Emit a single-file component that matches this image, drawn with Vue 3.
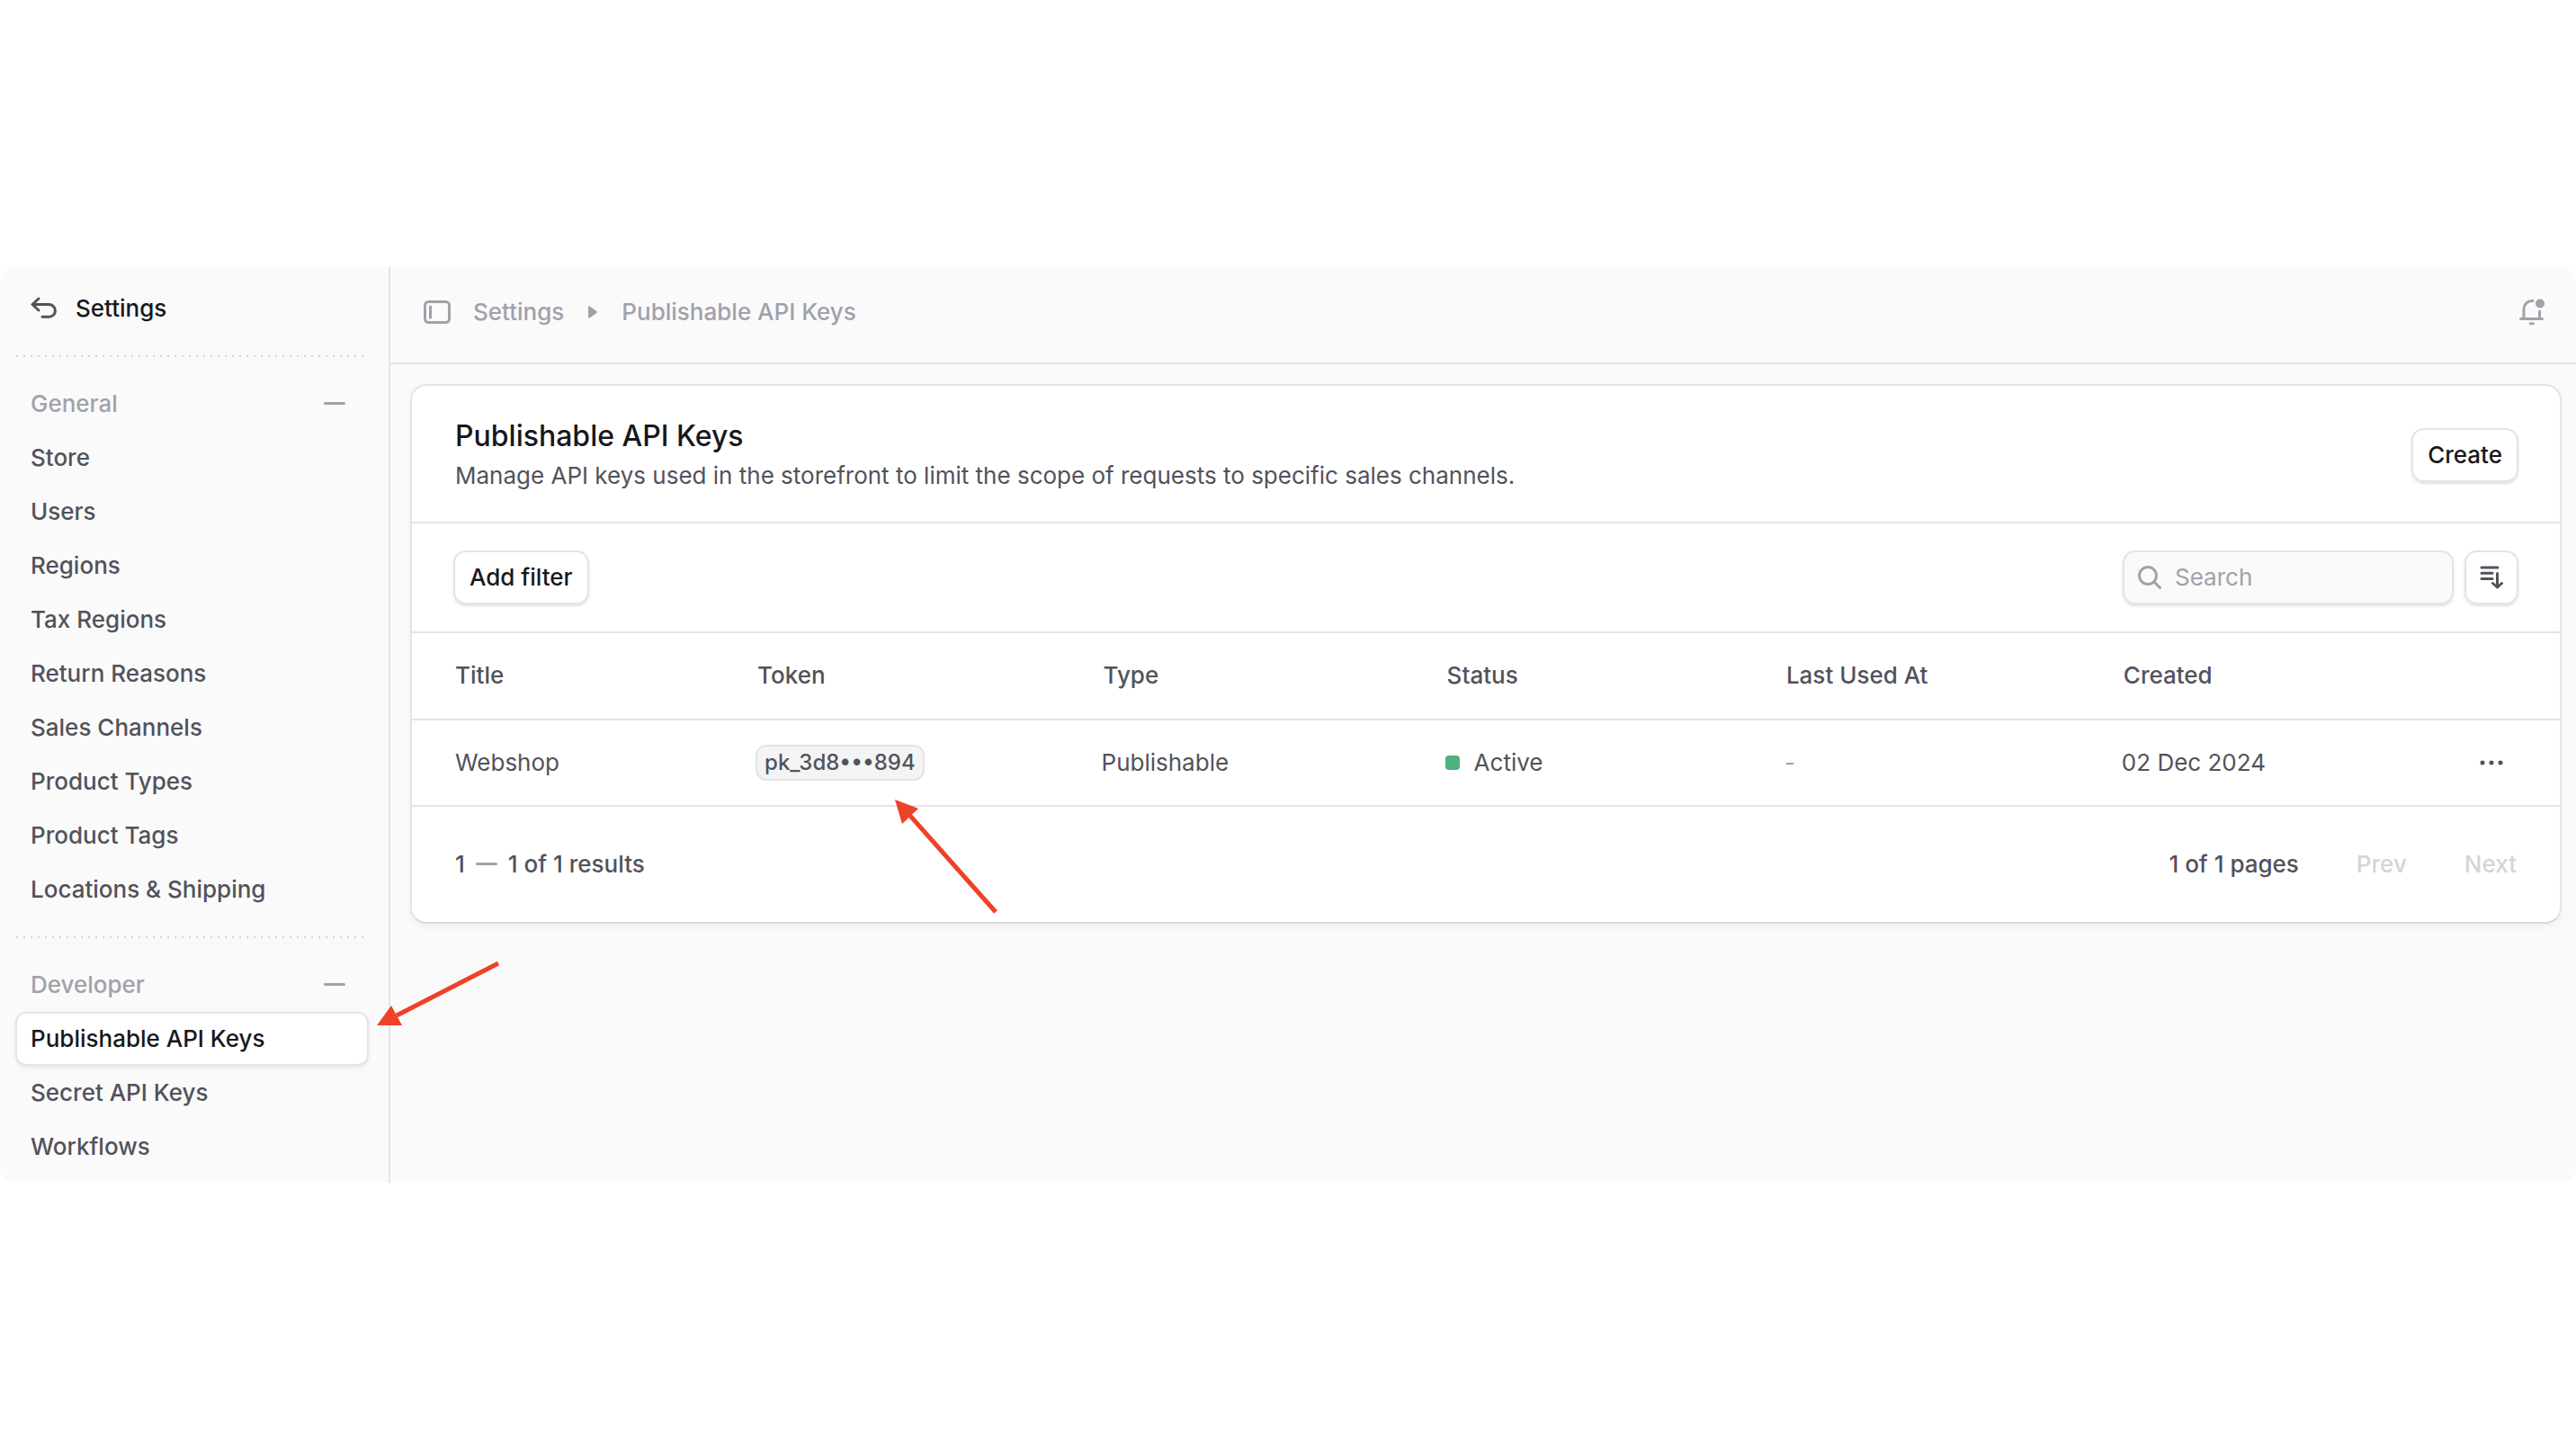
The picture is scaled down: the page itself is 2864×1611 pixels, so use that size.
<template>
  <div class="page">
    <div class="app-shell">
      <!-- Settings sidebar -->
      <aside class="sidebar">
        <a href="#" class="back-link">
          <svg class="icon back-icon" viewBox="0 0 30 26" fill="none">
            <path d="M9 2 L2 8.500 L9 15 M2 8.500 H20.500 A6.900 6.900 0 0 1 20.500 22.300 H13" stroke="currentColor" stroke-width="3" stroke-linecap="round" stroke-linejoin="round" />
          </svg>
          <span>Settings</span>
        </a>

        <nav v-for="section in sections" :key="section.label" class="nav-section" :aria-label="section.label">
          <div class="dotted-line"></div>
          <button type="button" class="section-toggle" @click="section.open = !section.open">
            <span>{{ section.label }}</span>
            <span class="minus"></span>
          </button>
          <template v-if="section.open">
            <a
              v-for="item in section.items"
              :key="item"
              href="#"
              :class="['nav-item', { 'is-active': item === activeItem }]"
              @click.prevent="activeItem = item"
            >
              {{ item }}
            </a>
          </template>
        </nav>
      </aside>

      <div class="content">
        <!-- Top bar: breadcrumbs and notifications -->
        <header class="topbar">
          <button type="button" class="icon-btn" aria-label="Toggle sidebar">
            <svg class="icon panel-icon" viewBox="0 0 30 26" fill="none">
              <rect x="1.5" y="1.5" width="27" height="23" rx="4" stroke="currentColor" stroke-width="3" />
              <path d="M7.5 7 V19" stroke="currentColor" stroke-width="3" stroke-linecap="round" />
            </svg>
          </button>
          <a href="#" class="crumb">Settings</a>
          <svg class="icon crumb-arrow" viewBox="0 0 10 14">
            <path d="M0 1.6 Q0 -0.4 2 0.8 L9 5.8 Q10.4 7 9 8.2 L2 13.2 Q0 14.4 0 12.4 Z" fill="currentColor" />
          </svg>
          <span class="crumb">Publishable API Keys</span>
          <button type="button" class="icon-btn bell-btn" aria-label="Notifications">
            <svg class="icon bell-icon" viewBox="0 0 28 30" fill="none">
              <path d="M15 2.500 H14 A9 9 0 0 0 5 11.500 V20 Q5 21.500 3 22.500 M22.500 14 V20 Q22.500 21.500 24 22.500 M1.500 22.500 H25.500" stroke="currentColor" stroke-width="3" stroke-linecap="round" stroke-linejoin="round" />
              <path d="M10.500 26.500 H17 A3.250 3 0 0 1 10.500 26.500 Z" fill="currentColor" />
              <circle cx="23" cy="5.500" r="5" fill="currentColor" />
            </svg>
          </button>
        </header>

        <main class="card">
          <div class="card-header">
            <div>
              <h1>Publishable API Keys</h1>
              <p>Manage API keys used in the storefront to limit the scope of requests to specific sales channels.</p>
            </div>
            <button type="button" class="btn">Create</button>
          </div>

          <div class="toolbar">
            <button type="button" class="btn">Add filter</button>
            <div class="toolbar-right">
              <label class="search">
                <svg class="icon search-icon" viewBox="0 0 26 26" fill="none">
                  <circle cx="11" cy="11" r="9.500" stroke="currentColor" stroke-width="3" />
                  <path d="M18 18 L24.500 24.500" stroke="currentColor" stroke-width="3" stroke-linecap="round" />
                </svg>
                <input v-model="query" type="text" placeholder="Search" aria-label="Search" />
              </label>
              <button type="button" class="btn sort-btn" aria-label="Sort">
                <svg class="icon sort-icon" viewBox="0 0 26 26" fill="none">
                  <path d="M2 2 H20 M2 8.200 H14 M2 14.400 H14 M19.500 8.500 V24 M14.500 19.500 L19.500 24 L24.500 19.500" stroke="currentColor" stroke-width="3" stroke-linecap="round" stroke-linejoin="round" />
                </svg>
              </button>
            </div>
          </div>

          <table>
            <colgroup>
              <col class="col-title" />
              <col class="col-token" />
              <col class="col-type" />
              <col class="col-status" />
              <col class="col-used" />
              <col />
              <col class="col-action" />
            </colgroup>
            <thead>
              <tr>
                <th v-for="column in columns" :key="column" scope="col">{{ column }}</th>
                <th></th>
              </tr>
            </thead>
            <tbody>
              <tr v-for="row in rows" :key="row.token">
                <td>{{ row.title }}</td>
                <td><span class="token">{{ row.token }}</span></td>
                <td>{{ row.type }}</td>
                <td>
                  <span class="status"><span class="status-dot"></span>{{ row.status }}</span>
                </td>
                <td class="muted">{{ row.lastUsed }}</td>
                <td>{{ row.created }}</td>
                <td>
                  <button type="button" class="icon-btn row-menu" aria-label="Row actions">
                    <svg class="icon dots-icon" viewBox="0 0 26 6">
                      <circle cx="3" cy="3" r="2.500" fill="currentColor" />
                      <circle cx="13" cy="3" r="2.500" fill="currentColor" />
                      <circle cx="23" cy="3" r="2.500" fill="currentColor" />
                    </svg>
                  </button>
                </td>
              </tr>
            </tbody>
          </table>

          <footer class="pagination">
            <div class="results">
              <span>1</span>
              <span class="minus"></span>
              <span>1 of 1 results</span>
            </div>
            <div class="pager">
              <span>1 of 1 pages</span>
              <button type="button" disabled>Prev</button>
              <button type="button" disabled>Next</button>
            </div>
          </footer>
        </main>
      </div>

      <!-- Red pointers drawn over the panel -->
      <svg class="pointer pointer-token" viewBox="0 0 116 130">
        <path d="M17 18 L112 125" stroke="#ee4128" stroke-width="5" />
        <path d="M0 0 L26 10 L8 27 Z" fill="#ee4128" />
      </svg>
      <svg class="pointer pointer-nav" viewBox="0 0 138 74">
        <path d="M22 61 L135 3" stroke="#ee4128" stroke-width="5" />
        <path d="M0 72 L16 50 L28 72 Z" fill="#ee4128" />
      </svg>
    </div>
  </div>
</template>

<script setup>
import { ref } from 'vue'

const sections = ref([
  {
    label: 'General',
    open: true,
    items: [
      'Store', 'Users', 'Regions', 'Tax Regions', 'Return Reasons',
      'Sales Channels', 'Product Types', 'Product Tags', 'Locations & Shipping'
    ]
  },
  {
    label: 'Developer',
    open: true,
    items: ['Publishable API Keys', 'Secret API Keys', 'Workflows']
  }
])

const activeItem = ref('Publishable API Keys')
const query = ref('')

const columns = ['Title', 'Token', 'Type', 'Status', 'Last Used At', 'Created']

const rows = [
  {
    title: 'Webshop',
    token: 'pk_3d8•••894',
    type: 'Publishable',
    status: 'Active',
    lastUsed: '-',
    created: '02 Dec 2024'
  }
]
</script>

<style>
body {
  background: #ffffff;
}
</style>

<style scoped>
.page {
  min-height: 100vh;
  display: flex;
  flex-direction: column;
  justify-content: center;
  box-sizing: border-box;
  font-family: Inter, "Liberation Sans", sans-serif;
  font-size: 26px;
  line-height: 40px;
  font-weight: 500;
  color: #52525b;
}

.page *,
.page *::before {
  box-sizing: border-box;
}

.app-shell {
  position: relative;
  display: flex;
  background: #fafafa;
  border-radius: 16px;
}

a {
  color: inherit;
  text-decoration: none;
}

button,
input {
  font: inherit;
  color: inherit;
  margin: 0;
  padding: 0;
  border: none;
  background: none;
}

.icon {
  display: block;
  flex: none;
}

/* Sidebar */
.sidebar {
  flex: none;
  width: 434px;
  padding: 0 22px 10px 17px;
  border-right: 2px solid #e4e4e7;
}

.back-link {
  display: flex;
  align-items: center;
  gap: 20px;
  height: 98px;
  padding: 0 17px 6px;
  color: #18181b;
}

.back-icon {
  width: 30px;
  height: 26px;
  color: #52525b;
}

.nav-section {
  padding-bottom: 22px;
}

.nav-section:last-child {
  padding-bottom: 0;
}

.dotted-line {
  height: 2px;
  margin: 0 4px 22px 1px;
  background: repeating-linear-gradient(to right, #d4d4d8 0 2px, transparent 2px 8px);
}

.section-toggle {
  display: flex;
  align-items: center;
  justify-content: space-between;
  width: 100%;
  height: 60px;
  padding: 0 26px 0 17px;
  color: #a1a1aa;
}

.minus {
  width: 24px;
  height: 3px;
  border-radius: 2px;
  background: #a1a1aa;
}

.nav-item {
  display: flex;
  align-items: center;
  height: 60px;
  padding: 0 17px;
  border-radius: 12px;
}

.nav-item.is-active {
  color: #18181b;
  background: #ffffff;
  box-shadow: inset 0 0 0 2px #e4e4e7, 0 2px 4px rgba(0, 0, 0, 0.08);
}

/* Main column */
.content {
  flex: 1;
  min-width: 0;
}

.topbar {
  display: flex;
  align-items: center;
  height: 108px;
  padding: 0 35px 6px 37px;
  border-bottom: 2px solid #e4e4e7;
  color: #a1a1aa;
}

.panel-icon {
  width: 30px;
  height: 26px;
  margin-right: 25px;
}

.crumb-arrow {
  width: 10px;
  height: 14px;
  margin: 0 27px;
}

.bell-btn {
  margin-left: auto;
}

.bell-icon {
  width: 28px;
  height: 30px;
}

.card {
  margin: 22px 16px 0 22px;
  background: #ffffff;
  border: 2px solid #e4e4e7;
  border-bottom-color: #d9d9dc;
  border-radius: 18px;
  box-shadow: 0 4px 8px rgba(0, 0, 0, 0.04);
}

.card-header {
  display: flex;
  align-items: center;
  justify-content: space-between;
  padding: 34px 46px 31px 48px;
  border-bottom: 2px solid #e4e4e7;
}

h1 {
  margin: 0 0 2px;
  font-size: 32px;
  line-height: 44px;
  font-weight: 500;
  color: #18181b;
}

p {
  margin: 0;
  font-weight: 400;
}

.btn {
  height: 60px;
  padding: 0 18px;
  border-radius: 14px;
  background: #ffffff;
  color: #18181b;
  box-shadow: inset 0 0 0 2px #e4e4e7, 0 2px 3px rgba(0, 0, 0, 0.12);
}

.toolbar {
  display: flex;
  justify-content: space-between;
  padding: 30px 46px;
  border-bottom: 2px solid #e4e4e7;
}

.toolbar-right {
  display: flex;
  gap: 12px;
}

.search {
  display: flex;
  align-items: center;
  gap: 15px;
  width: 368px;
  height: 60px;
  padding: 0 17px;
  border-radius: 14px;
  background: #fafafa;
  color: #a1a1aa;
  font-weight: 400;
  box-shadow: inset 0 0 0 2px #e4e4e7, 0 2px 3px rgba(0, 0, 0, 0.12);
}

.search input {
  flex: 1;
  min-width: 0;
  color: #18181b;
  outline: none;
}

.search input::placeholder {
  color: #a1a1aa;
  opacity: 1;
}

.search-icon,
.sort-icon {
  width: 26px;
  height: 26px;
}

.sort-btn {
  display: flex;
  align-items: center;
  justify-content: center;
  width: 60px;
  padding: 0;
  color: #52525b;
}

/* Keys table */
table {
  width: 100%;
  table-layout: fixed;
  border-collapse: separate;
  border-spacing: 0;
}

.col-title,
.col-type {
  width: 16%;
}

.col-token {
  width: 16.1%;
}

.col-status {
  width: 15.8%;
}

.col-used {
  width: 15.7%;
}

.col-action {
  width: 106px;
}

th,
td {
  padding: 0;
  text-align: left;
  border-bottom: 2px solid #e4e4e7;
}

th {
  height: 97px;
  padding-left: 2px;
  font-weight: 500;
}

td {
  height: 96px;
  font-weight: 400;
}

th:first-child,
td:first-child {
  padding-left: 48px;
}

.muted {
  color: #a1a1aa;
}

.token {
  display: block;
  width: fit-content;
  padding: 0 8px;
  font-size: 24px;
  line-height: 36px;
  font-weight: 500;
  background: #f4f4f5;
  border: 2px solid #e4e4e7;
  border-radius: 12px;
}

.status {
  display: flex;
  align-items: center;
  gap: 16px;
}

.status-dot {
  width: 16px;
  height: 16px;
  border-radius: 4px;
  background: #50b080;
}

.dots-icon {
  width: 26px;
  height: 6px;
}

.row-menu {
  display: block;
  padding: 17px;
}

/* Pagination */
.pagination {
  display: flex;
  align-items: center;
  justify-content: space-between;
  padding: 44px 48px;
}

.results {
  display: flex;
  align-items: center;
  gap: 12px;
}

.pager {
  display: flex;
  align-items: center;
  gap: 64px;
}

.pager button {
  color: #d4d4d8;
}

/* Pointers */
.pointer {
  position: absolute;
}

.pointer-token {
  left: 995px;
  top: 592px;
  width: 116px;
  height: 130px;
}

.pointer-nav {
  left: 419px;
  top: 771px;
  width: 138px;
  height: 74px;
}
</style>
